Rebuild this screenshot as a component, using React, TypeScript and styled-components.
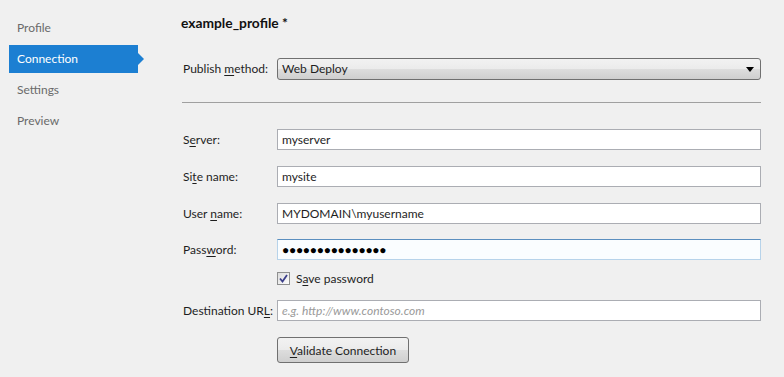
import React from 'react';
import styled, { createGlobalStyle } from 'styled-components';

const GlobalStyle = createGlobalStyle`
  html, body {
    margin: 0;
    padding: 0;
    background: #f0f0f0;
  }
  body {
    font-family: Lato, "Noto Sans", sans-serif;
    font-size: 12px;
    line-height: 16px;
    color: #1e1e1e;
  }
`;

const Page = styled.div`
  display: flex;
  width: 784px;
  height: 377px;
  overflow: hidden;
`;

// left navigation
const Sidebar = styled.nav`
  width: 182px;
  flex-shrink: 0;
  display: flex;
  flex-direction: column;
  gap: 3px;
  padding-top: 14px;
  box-sizing: border-box;
`;

const NavItem = styled.div<{ $active?: boolean }>`
  position: relative;
  margin-left: 9px;
  width: 129px;
  height: 28px;
  line-height: 28px;
  padding-left: 8px;
  box-sizing: border-box;
  color: ${(p) => (p.$active ? '#ffffff' : '#6a6a6a')};
  background: ${(p) => (p.$active ? '#1c7fd2' : 'transparent')};

  &::after {
    content: '';
    display: ${(p) => (p.$active ? 'block' : 'none')};
    position: absolute;
    right: -6px;
    top: 8px;
    border-left: 6px solid #1c7fd2;
    border-top: 6px solid transparent;
    border-bottom: 6px solid transparent;
  }
`;

const Main = styled.main`
  width: 579px;
  display: flex;
  flex-direction: column;
`;

const Title = styled.div`
  margin-top: 14px;
  margin-left: -1px;
  height: 16px;
  line-height: 18px;
  font-size: 13.8px;
  font-weight: bold;
  color: #111;
`;

const Row = styled.div<{ $top: number; $h: number }>`
  display: flex;
  align-items: center;
  height: ${(p) => p.$h}px;
  margin-top: ${(p) => p.$top}px;
`;

const Label = styled.label`
  width: 95px;
  flex-shrink: 0;
  padding-left: 1px;
  box-sizing: border-box;
  white-space: nowrap;
`;

const Key = styled.span`
  text-decoration: underline;
  text-underline-offset: 2px;
`;

const Select = styled.div`
  flex: 1;
  height: 22px;
  box-sizing: border-box;
  border: 1px solid #707070;
  border-radius: 3px;
  background: linear-gradient(#f2f2f2 0%, #ebebeb 50%, #dddddd 51%, #cfcfcf 100%);
  display: flex;
  align-items: center;
  justify-content: space-between;
  padding: 0 6px 0 4px;
`;

const Caret = styled.span`
  width: 0;
  height: 0;
  border-left: 4px solid transparent;
  border-right: 4px solid transparent;
  border-top: 5px solid #000;
`;

const Divider = styled.hr`
  margin: 22px 0 0 0;
  border: none;
  border-top: 1px solid #a0a0a0;
  height: 0;
`;

const Input = styled.div<{ $focused?: boolean; $placeholder?: boolean }>`
  flex: 1;
  height: 21px;
  line-height: 19px;
  box-sizing: border-box;
  padding-left: 4px;
  background: ${(p) => (p.$focused ? '#fafdff' : '#ffffff')};
  border: 1px solid ${(p) => (p.$focused ? '#b7d3ea' : '#abadb3')};
  border-top-color: ${(p) => (p.$focused ? '#5b8fbf' : '#abadb3')};
  color: ${(p) => (p.$placeholder ? '#9a9a9a' : '#1e1e1e')};
  font-style: ${(p) => (p.$placeholder ? 'italic' : 'normal')};
`;

const Dots = styled.span`
  font-family: "Liberation Sans", sans-serif;
  font-size: 12px;
  letter-spacing: -0.3px;
  color: #000;
`;

const Check = styled.div`
  margin-left: 95px;
  display: flex;
  align-items: center;
  gap: 6px;
`;

const Box = styled.span`
  width: 13px;
  height: 13px;
  box-sizing: border-box;
  border: 1px solid #8e8f8f;
  background: linear-gradient(135deg, #dcdcdc, #fdfdfd);
  display: flex;
  align-items: center;
  justify-content: center;
`;

const Button = styled.button`
  margin-left: 95px;
  width: 132px;
  height: 26px;
  font-family: inherit;
  font-size: 12px;
  color: #1e1e1e;
  border: 1px solid #707070;
  border-radius: 3px;
  background: linear-gradient(#f2f2f2 0%, #ebebeb 50%, #dddddd 51%, #cfcfcf 100%);
  padding: 0;
`;

const App = () => {
  return (
    <Page>
      <GlobalStyle />
      <Sidebar>
        <NavItem>Profile</NavItem>
        <NavItem $active>Connection</NavItem>
        <NavItem>Settings</NavItem>
        <NavItem>Preview</NavItem>
      </Sidebar>
      <Main>
        <Title>example_profile *</Title>
        <Row $top={28} $h={22}>
          <Label>
            Publish <Key>m</Key>ethod:
          </Label>
          <Select>
            <span>Web Deploy</span>
            <Caret />
          </Select>
        </Row>
        <Divider />
        <Row $top={26} $h={21}>
          <Label>
            S<Key>e</Key>rver:
          </Label>
          <Input>myserver</Input>
        </Row>
        <Row $top={16} $h={21}>
          <Label>
            Si<Key>t</Key>e name:
          </Label>
          <Input>mysite</Input>
        </Row>
        <Row $top={16} $h={21}>
          <Label>
            User <Key>n</Key>ame:
          </Label>
          <Input>MYDOMAIN\myusername</Input>
        </Row>
        <Row $top={15} $h={21}>
          <Label>
            Pass<Key>w</Key>ord:
          </Label>
          <Input $focused>
            <Dots>●●●●●●●●●●●●●●●</Dots>
          </Input>
        </Row>
        <Row $top={12} $h={13}>
          <Check>
            <Box>
              <svg width="9" height="9" viewBox="0 0 9 9">
                <path d="M1 4.5 L3.5 7.5 L8 1" fill="none" stroke="#3c3f8a" strokeWidth="1.8" />
              </svg>
            </Box>
            <span>
              S<Key>a</Key>ve password
            </span>
          </Check>
        </Row>
        <Row $top={15} $h={21}>
          <Label>
            Destination UR<Key>L</Key>:
          </Label>
          <Input $placeholder>e.g. http://www.contoso.com</Input>
        </Row>
        <Row $top={16} $h={26}>
          <Button>
            <Key>V</Key>alidate Connection
          </Button>
        </Row>
      </Main>
    </Page>
  );
};

export default App;
